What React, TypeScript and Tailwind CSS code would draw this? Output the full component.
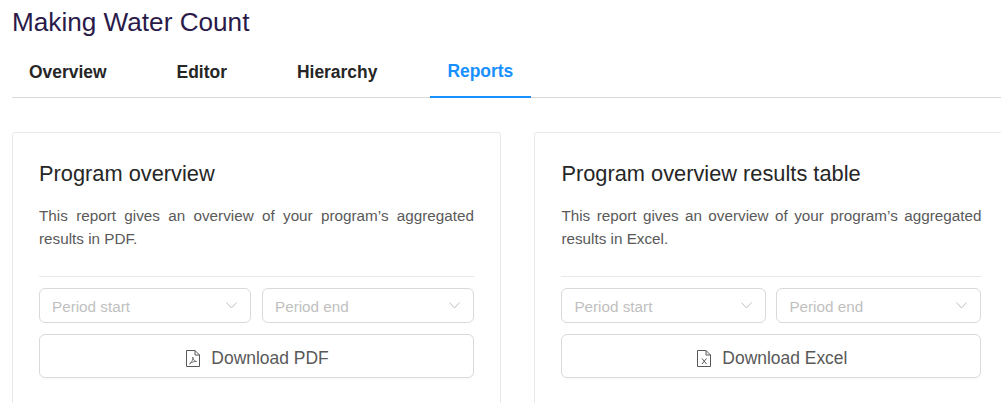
import type { ReactNode } from 'react';

const tabs = ['Overview', 'Editor', 'Hierarchy', 'Reports'];

function PdfIcon() {
  return (
    <svg className="h-[17px] w-[14px]" viewBox="0 0 14 17" fill="none" stroke="currentColor">
      <path d="M0.5 0.5 H9 L13.5 5 V16.5 H0.5 Z" />
      <path d="M9 0.5 V5 H13.5" />
      <path d="M3.5 14 C5.5 12.5 7.5 9.5 6.8 7 C6.8 9 8.5 11.5 10.5 11.5 C8.5 11.3 5.5 12 3.5 14 Z" strokeWidth="0.8" />
    </svg>
  );
}

function ExcelIcon() {
  return (
    <svg className="h-[17px] w-[14px]" viewBox="0 0 14 17" fill="none" stroke="currentColor">
      <path d="M0.5 0.5 H9 L13.5 5 V16.5 H0.5 Z" />
      <path d="M9 0.5 V5 H13.5" />
      <path d="M5 8.5 L9.5 14 M9.5 8.5 L5 14" />
    </svg>
  );
}

function PeriodSelect({ label }: { label: string }) {
  return (
    <div className="flex h-[35px] items-center justify-between rounded-[6px] border border-[#d9d9d9] bg-white pl-[12px] pr-[13px]">
      <span className="pt-[3px] text-[15.26px] text-[#bfbfbf]">{label}</span>
      <svg className="h-[7px] w-[11px] text-[#bfbfbf]" viewBox="0 0 11 7" fill="none" stroke="currentColor">
        <path d="M0.5 0.5 L5.5 6 L10.5 0.5" />
      </svg>
    </div>
  );
}

function ReportCard({
  title,
  format,
  action,
  icon,
  className,
  selectGap,
}: {
  title: string;
  format: string;
  action: string;
  icon: ReactNode;
  className: string;
  selectGap: string;
}) {
  return (
    <div className={`h-[320px] shrink-0 rounded-[3px] border border-[#e8e8e8] bg-white px-[26px] pt-[27px] ${className}`}>
      <h2 className="text-[21.8px] leading-[28px] text-[#262626]">{title}</h2>
      <p className="mt-[16px] text-justify text-[15.26px] leading-[23px] text-[#595959]">
        This report gives an overview of your program’s aggregated results in {format}.
      </p>
      <div className="mt-[26px] border-t border-[#e8e8e8] pt-[11px]">
        <div className={`grid grid-cols-2 ${selectGap}`}>
          <PeriodSelect label="Period start" />
          <PeriodSelect label="Period end" />
        </div>
        <button className="mt-[11px] flex h-[44px] w-full items-center justify-center gap-[11px] rounded-[6px] border border-[#d9d9d9] bg-white pl-[2px] pt-[4px] text-[17.44px] text-[#595959] shadow-[0_2px_0_rgba(0,0,0,0.015)]">
          {icon}
          <span className="pt-[1px]">{action}</span>
        </button>
      </div>
    </div>
  );
}

export default function App() {
  return (
    <div className="h-[403px] w-[1001px] overflow-hidden bg-white font-['Liberation_Sans',Arial,sans-serif]">
      <div className="pl-[12px]">
        <h1 className="pt-[6px] text-[26.16px] leading-[32px] text-[#2a1a4a]">Making Water Count</h1>
        <nav className="mt-[12px] flex h-[48px] border-b border-[#d9d9d9]">
          {tabs.map((tab) => (
            <div
              key={tab}
              className={`mr-[36px] -mb-px flex items-center pb-[3px] pl-[17px] text-[17.44px] font-bold ${
                tab === 'Reports' ? 'border-b-2 border-[#1890ff] pr-[18px] text-[#1890ff]' : 'pr-[17px] text-[#262626]'
              }`}
            >
              {tab}
            </div>
          ))}
        </nav>
        <div className="mt-[34px] flex gap-[33.4px]">
          <ReportCard
            title="Program overview"
            format="PDF"
            action="Download PDF"
            className="w-[489px]"
            selectGap="gap-[11px]"
            icon={<PdfIcon />}
          />
          <ReportCard
            title="Program overview results table"
            format="Excel"
            action="Download Excel"
            className="w-[474px]"
            selectGap="gap-[10px]"
            icon={<ExcelIcon />}
          />
        </div>
      </div>
    </div>
  );
}
